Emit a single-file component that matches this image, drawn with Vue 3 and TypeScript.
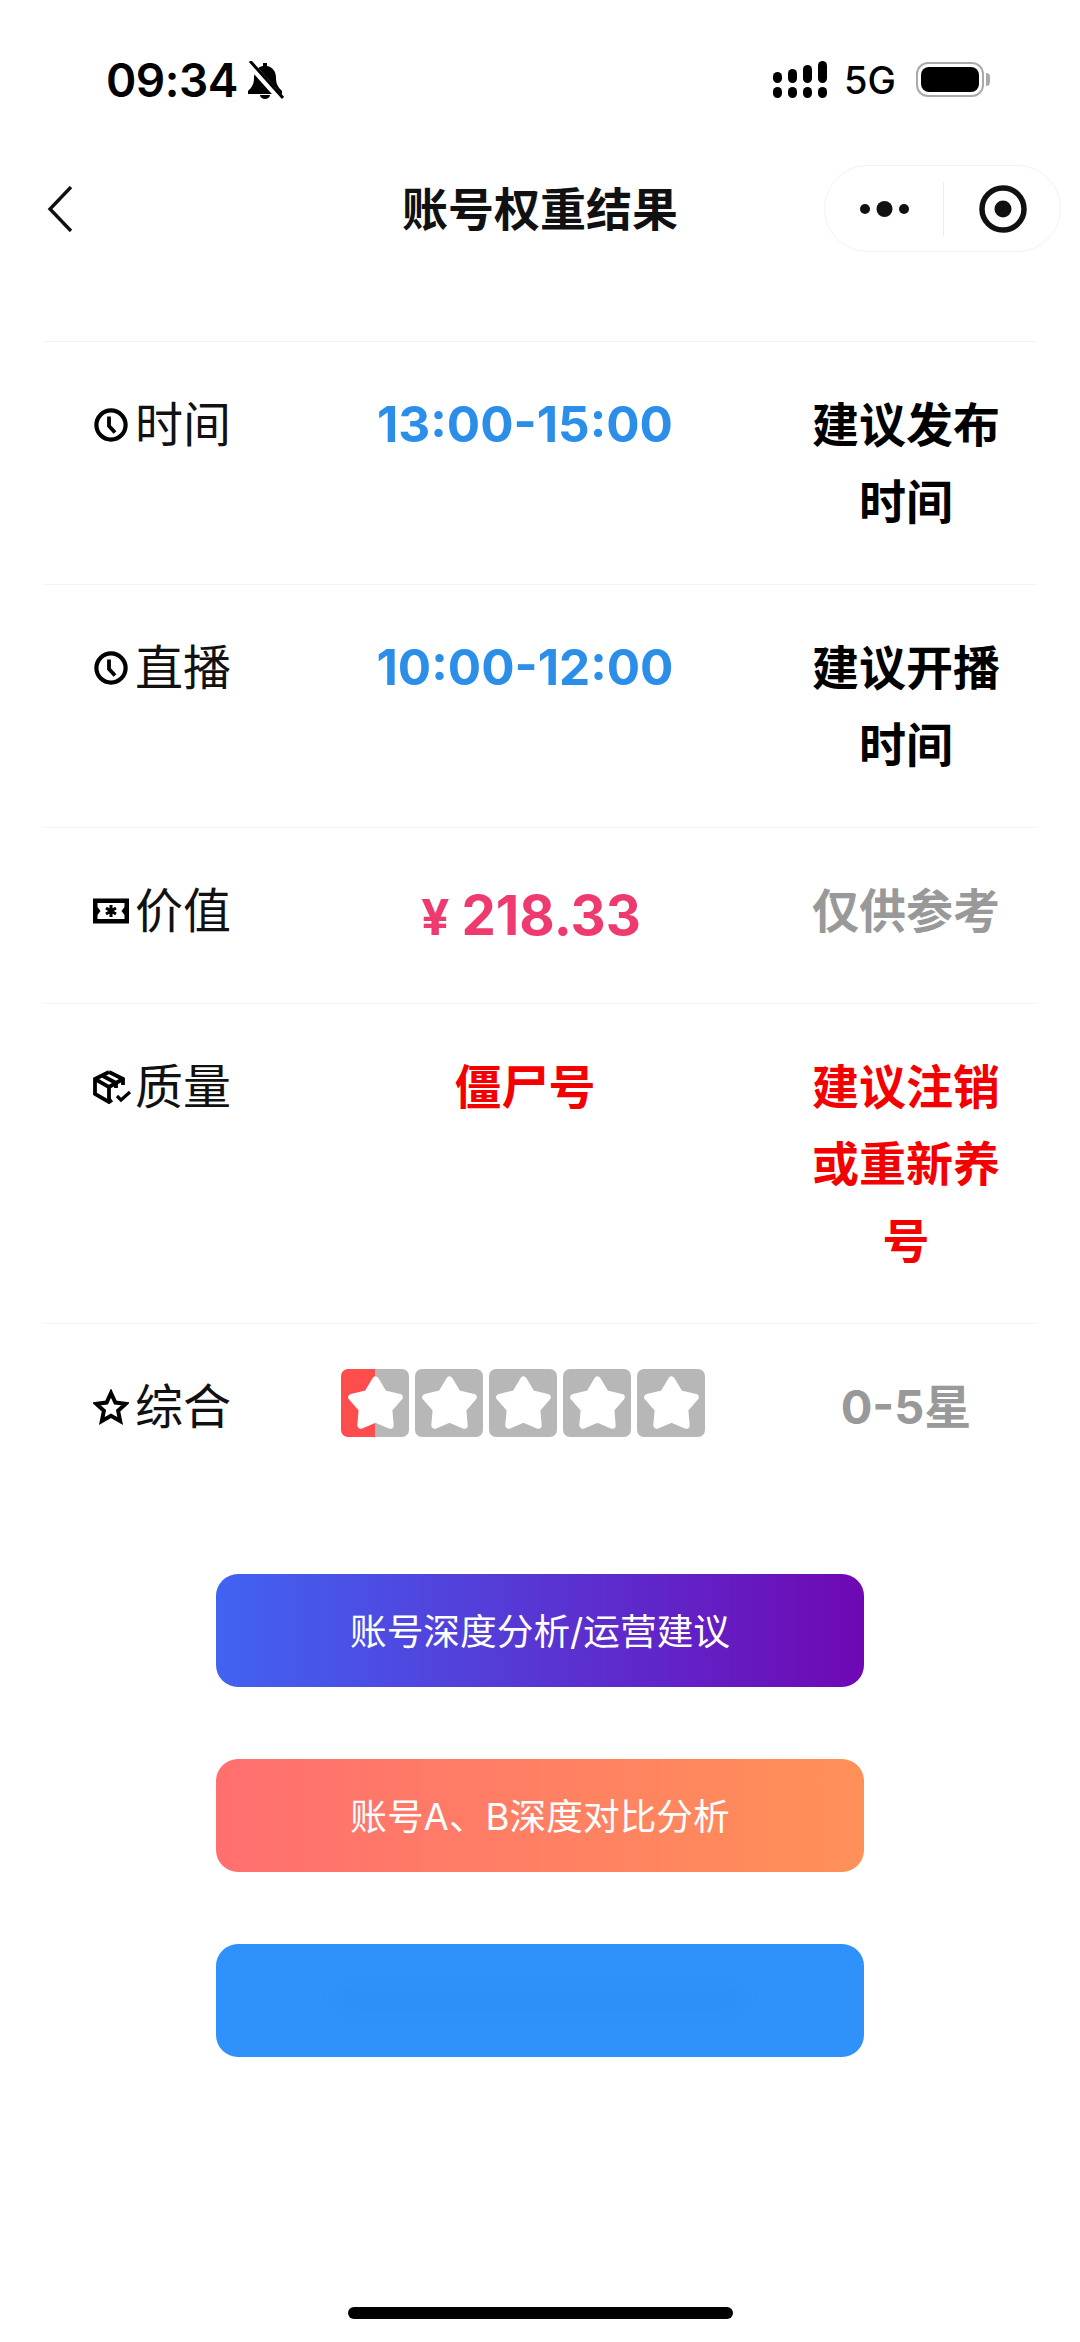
<script setup lang="ts">
interface Row {
  label: string
  icon: 'clock' | 'ticket' | 'box'
  value: string
  valueClass: string
  note: string
  noteClass: string
}

const rows: Row[] = [
  { label: '时间', icon: 'clock', value: '13:00-15:00', valueClass: 'time', note: '建议发布时间', noteClass: '' },
  { label: '直播', icon: 'clock', value: '10:00-12:00', valueClass: 'time', note: '建议开播时间', noteClass: '' },
  { label: '价值', icon: 'ticket', value: '218.33', valueClass: 'price', note: '仅供参考', noteClass: 'muted' },
  { label: '质量', icon: 'box', value: '僵尸号', valueClass: 'bad', note: '建议注销或重新养号', noteClass: 'bad' }
]

const stars = [1, 2, 3, 4, 5]
const starPoints = '34.5,11 42.7,24.7 58.3,28.3 47.8,40.3 49.2,56.2 34.5,50 19.8,56.2 21.2,40.3 10.7,28.3 26.3,24.7'
</script>

<template>
  <div class="page">
    <div class="status">
      <div class="status-left">
        <span class="clock-text">09:34</span>
        <svg class="bell" viewBox="0 0 38 38" width="38" height="38">
          <path d="M17 2h4v3c6 1 9 6 9 12 0 6 2 9 6 13v3H2v-3c4-4 6-7 6-13 0-6 3-11 9-12z" fill="#000" />
          <path d="M14 34h10a5 4 0 0 1-10 0z" fill="#000" />
          <path d="M3 2l32 36" stroke="#fff" stroke-width="7" />
          <path d="M4 0l33 37" stroke="#000" stroke-width="3" />
        </svg>
      </div>
      <div class="status-right">
        <svg viewBox="0 0 54 37" width="54" height="37">
          <g fill="#000">
            <rect x="0" y="11" width="9" height="11" rx="4.5" />
            <rect x="15" y="8" width="9" height="14" rx="4.5" />
            <rect x="30" y="4" width="9" height="18" rx="4.5" />
            <rect x="45" y="0" width="9" height="22" rx="4.5" />
            <rect x="0" y="26" width="9" height="11" rx="4.5" />
            <rect x="15" y="26" width="9" height="11" rx="4.5" />
            <rect x="30" y="26" width="9" height="11" rx="4.5" />
            <rect x="45" y="26" width="9" height="11" rx="4.5" />
          </g>
        </svg>
        <span class="net">5G</span>
        <div class="battery"><span class="battery-level"></span></div>
      </div>
    </div>

    <div class="nav">
      <svg class="back" viewBox="0 0 26 46" width="26" height="46">
        <path d="M24 1L3 23l21 22" fill="none" stroke="#111" stroke-width="3.4" />
      </svg>
      <div class="title">账号权重结果</div>
      <div class="capsule">
        <svg viewBox="0 0 49 20" width="49" height="20">
          <circle cx="5" cy="10" r="5" fill="#111" />
          <circle cx="24.5" cy="10" r="8" fill="#111" />
          <circle cx="44" cy="10" r="5" fill="#111" />
        </svg>
        <span class="capsule-line"></span>
        <svg viewBox="0 0 48 48" width="48" height="48">
          <circle cx="24" cy="24" r="21" fill="none" stroke="#111" stroke-width="5.5" />
          <circle cx="24" cy="24" r="8.5" fill="#111" />
        </svg>
      </div>
    </div>

    <div class="table">
      <div v-for="row in rows" :key="row.label" class="row">
        <div class="label">
          <svg v-if="row.icon === 'clock'" class="icon" viewBox="0 0 36 36" width="36" height="36">
            <circle cx="18" cy="18" r="14.6" fill="none" stroke="#000" stroke-width="4.2" />
            <path d="M16 9.500v9.500l6 6.500" fill="none" stroke="#000" stroke-width="3.8" />
          </svg>
          <svg v-else-if="row.icon === 'ticket'" class="icon" viewBox="0 0 36 36" width="36" height="36">
            <path d="M0 5.500h36v25H0z" fill="#000" />
            <path d="M4.500 10h27v4l-3 4 3 4v4h-27v-4l3-4-3-4z" fill="#fff" />
            <path d="M18 12v12M13 15l10 6M23 15l-10 6" stroke="#000" stroke-width="3" />
          </svg>
          <svg v-else class="icon box" viewBox="0 0 40 36" width="40" height="36">
            <path d="M16 3l14 7v6M16 3L2 10v15l14 8 3-2M2 10l14 8v14M16 18l14-8M9 6.500l14 7.500v5" fill="none" stroke="#000" stroke-width="3.8" />
            <path d="M24 27l4 4 9-8" fill="none" stroke="#000" stroke-width="3.2" />
          </svg>
          <span>{{ row.label }}</span>
        </div>
        <div class="value" :class="row.valueClass">
          <span v-if="row.valueClass === 'price'" class="yen">¥</span>{{ row.value }}
        </div>
        <div class="note" :class="row.noteClass">{{ row.note }}</div>
      </div>

      <div class="row rating">
        <div class="label">
          <svg class="icon" viewBox="0 0 36 36" width="36" height="36">
            <path d="M18 4l4.400 9.600 10.400 1.200-7.700 7 2.100 10.200L18 26.800 8.800 32l2.100-10.200-7.700-7 10.400-1.200z" fill="none" stroke="#000" stroke-width="4" stroke-linejoin="miter" />
          </svg>
          <span>综合</span>
        </div>
        <div class="value stars">
          <span v-for="n in stars" :key="n" class="star" :class="{ half: n === 1 }">
            <svg viewBox="0 0 68 68" width="68" height="68">
              <polygon :points="starPoints" fill="#fff" stroke="#fff" stroke-width="7" stroke-linejoin="round" />
            </svg>
          </span>
        </div>
        <div class="note muted range">0-5星</div>
      </div>
    </div>

    <div class="actions">
      <div class="btn purple">账号深度分析/运营建议</div>
      <div class="btn orange">账号A、B深度对比分析</div>
      <div class="btn blue"><span class="smudge"></span></div>
    </div>

    <div class="home"></div>
  </div>
</template>

<style scoped>
.page {
  width: 1080px;
  height: 2342px;
  display: flex;
  flex-direction: column;
  background: #fff;
  color: #000;
  font-family: Inter, "Noto Sans CJK SC", sans-serif;
  overflow: hidden;
}

.page > * {
  flex: none;
}

.status {
  height: 165px;
  padding: 0 96px 6px 106px;
  box-sizing: border-box;
  display: flex;
  justify-content: space-between;
  align-items: center;
}

.status-left,
.status-right {
  display: flex;
  align-items: center;
}

.clock-text {
  font-size: 46px;
  font-weight: 600;
  line-height: 56px;
  letter-spacing: -0.5px;
}

.bell {
  margin-left: 8px;
}

.net {
  margin-left: 17px;
  font-size: 38px;
  line-height: 40px;
  font-weight: 500;
}

.battery {
  position: relative;
  margin-left: 20px;
  width: 68px;
  height: 35px;
  box-sizing: border-box;
  padding: 3px;
  border: 2px solid #aaa;
  border-radius: 12px;
}

.battery::after {
  content: "";
  position: absolute;
  right: -8px;
  top: 9px;
  width: 4px;
  height: 13px;
  border-radius: 0 4px 4px 0;
  background: #aaa;
}

.battery-level {
  display: block;
  width: 100%;
  height: 100%;
  border-radius: 8px;
  background: #000;
}

.nav {
  height: 87px;
  padding: 0 19px;
  display: grid;
  grid-template-columns: minmax(0, 1fr) auto minmax(0, 1fr);
  align-items: center;
}

.back {
  display: block;
  margin-left: 28px;
}

.title {
  font-size: 46px;
  font-weight: 700;
  line-height: 60px;
  color: #111;
}

.capsule {
  justify-self: end;
  width: 237px;
  height: 87px;
  box-sizing: border-box;
  border: 1px solid #f2f2f2;
  border-radius: 44px;
  padding-left: 35px;
  display: flex;
  align-items: center;
}

.capsule-line {
  width: 1px;
  height: 54px;
  margin: 0 35px 0 34px;
  background: #ececec;
}

.table {
  margin: 89px 43px 0;
}

.row {
  padding: 44px 0 44px 50px;
  display: grid;
  grid-template-columns: 247px 370px 290px;
  border-top: 1px solid #f4f4f4;
  font-size: 47px;
  line-height: 77px;
}

.label {
  display: flex;
  align-items: center;
  height: 77px;
  align-self: start;
  font-size: 48px;
  font-weight: 400;
}

.label .icon {
  flex: none;
  width: 36px;
  margin-right: 6px;
}

.label .icon.box {
  width: 40px;
  margin-right: 2px;
}

.label span {
  color: #111;
}

.value {
  text-align: center;
  font-weight: 700;
}

.value.time {
  font-size: 49.500px;
  color: #2b8ee8;
}

.value.price {
  padding-left: 12px;
  font-size: 54.500px;
  line-height: 87px;
  color: #ee3a6e;
}

.yen {
  font-size: 50px;
  line-height: 1;
  margin-right: 12px;
}

.bad {
  color: #f40000;
}

.note {
  padding-left: 102px;
  text-align: center;
  font-weight: 700;
}

.muted {
  color: #999;
}

.stars {
  box-sizing: border-box;
  display: flex;
  justify-content: center;
  align-items: center;
  gap: 6px;
  height: 77px;
  padding: 0 4px 8px 0;
}

.star {
  flex: none;
  width: 68px;
  height: 68px;
  border-radius: 7px;
  background: #b7b7b7;
}

.star.half {
  background: linear-gradient(90deg, #ff4d4d 50%, #b7b7b7 50%);
}

.star svg {
  display: block;
}

.range {
  white-space: nowrap;
}

.actions {
  margin-top: 85px;
  display: flex;
  flex-direction: column;
  align-items: center;
  gap: 72px;
}

.btn {
  box-sizing: border-box;
  width: 648px;
  height: 113px;
  padding-bottom: 3px;
  border-radius: 22px;
  display: flex;
  align-items: center;
  justify-content: center;
  color: #fff;
  font-size: 36.700px;
}

.purple {
  background: linear-gradient(90deg, #4163f2, #6f08b4);
}

.orange {
  background: linear-gradient(90deg, #ff6f6f, #ff9058);
}

.blue {
  background: #2e92fa;
}

.smudge {
  width: 400px;
  height: 30px;
  background: #2b8cf2;
  filter: blur(8px);
  opacity: 0.35;
}

.home {
  margin: auto auto 30px;
  width: 385px;
  height: 12px;
  border-radius: 6px;
  background: #000;
  transform: translateY(7px);
}
</style>

<style>
html,
body {
  margin: 0;
  background: #fff;
}
</style>
